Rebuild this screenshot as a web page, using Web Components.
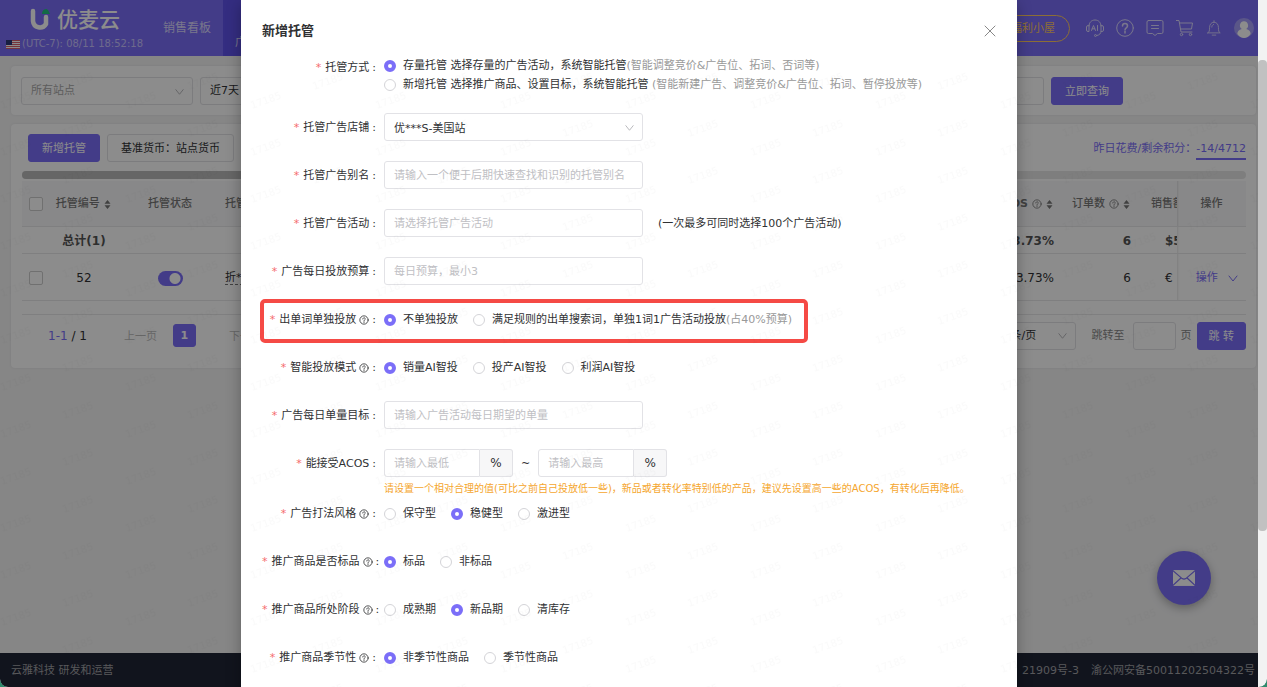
<!DOCTYPE html>
<html lang="zh-CN">
<head>
<meta charset="utf-8">
<meta name="viewport" content="width=device-width, initial-scale=1">
<title>优麦云</title>
<style>
    html {
        background: #2f8a6c;
    }

    body {
        --primary: #7b6ef8;
        --text: #303133;
        --muted: #999;
        --line: #e2e2e6;
        margin: 0;
        display: flex;
        height: 100vh;
        overflow: hidden;
        border-radius: 0 0 8px 8px;
        color: var(--text);
        font: 11px/18px "DejaVu Sans", "Noto Sans CJK SC", sans-serif;
    }
</style>
</head>
<body>
<app-shell>
    <app-header slot="header"></app-header>
    <filter-bar></filter-bar>
    <hosting-table></hosting-table>
    <app-footer slot="footer"></app-footer>
    <mail-button slot="overlay"></mail-button>
    <hosting-dialog slot="dialog"></hosting-dialog>
</app-shell>
<page-scrollbar></page-scrollbar>

<script>
const controls = `
    * {
        box-sizing: border-box;
    }

    button, input, select {
        font: inherit;
        color: inherit;
        margin: 0;
    }

    button {
        height: 28px;
        padding: 2px 13px 0;
        border: 1px solid var(--line);
        border-radius: 3px;
        background: #fff;
        white-space: nowrap;
    }

    button.primary {
        border-color: var(--primary);
        background: var(--primary);
        color: #fff;
    }

    input[type="text"], select {
        height: 28px;
        min-width: 0;
        padding: 0 9px;
        border: 1px solid var(--line);
        border-radius: 3px;
        background: #fff;
        appearance: none;
        outline: none;
    }

    input[type="text"] {
        padding-top: 2px;
    }

    input::placeholder {
        color: #c0c0c4;
        opacity: 1;
    }

    .select {
        display: grid;
        align-items: center;
    }

    .select > * {
        grid-area: 1 / 1;
    }

    .select ui-icon {
        justify-self: end;
        margin-right: 8px;
        color: #b4b4b8;
        pointer-events: none;
    }
`;

const icons = {
    down: '<path d="M2 4l4 5 4-5"/>',
    close: '<path d="M1 1l10 10M11 1L1 11"/>',
    help: '<circle cx="6" cy="6" r="5"/><path d="M4.5 4.8c0-2 3-2 3 0 0 1.100-1.500 1.100-1.500 2.200M6 8.200v.8"/>',
    sort: '<path d="M6 0l4 5H2zM6 12l4-5H2z" fill="currentColor" stroke="none"/>',
    question: '<circle cx="9" cy="9" r="8.300"/><path d="M6.500 7c0-3.300 5-3.300 5 0 0 1.900-2.500 1.900-2.500 4" stroke-width="1.500"/><path d="M9 12.600v1.400" stroke-width="1.500"/>',
    message: '<path d="M2.500 1.500h13q1.500 0 1.500 1.500v10q0 1.500-1.500 1.500h-4L9 16.500l-2.500-2h-4Q1 14.500 1 13V3q0-1.500 1.500-1.500zM5.500 6.500h7M5.500 9.500h7"/>',
    cart: '<path d="M0 1.500h3l2 11.500h11M3.500 4h13L15.500 10H4.500"/><circle cx="5.500" cy="15.500" r="1.200"/><circle cx="14.500" cy="15.500" r="1.200"/>',
    bell: '<path d="M2 14.500h14c-1.700-1-2-2-2-6C14 5 12 2.500 9 2.500S4 5 4 8.500c0 4-.3 5-2 6zM9 .8v1.700M7 17h4M6.500 8c0-1.500.8-2.500 2-3"/>',
    headset: '<path d="M3 7C3 3.500 5.500 1 9 1s6 2.500 6 6M3 6.500v6H2q-1.500 0-1.500-1.500V8Q.5 6.500 2 6.500zM15 6.500v6h1q1.500 0 1.500-1.500V8q0-1.500-1.500-1.500zM15 12.500c0 2-1.500 3.500-4 4"/><circle cx="9.500" cy="16.500" r="1"/><path d="M5.500 11.500l2-5 2 5M6.200 9.800h2.600M11.500 6.500v5"/>',
    avatar: '<circle cx="9" cy="9" r="9" fill="#a59df8" stroke="none"/><path d="M9 3a3.600 3.800 0 0 1 2 7c2.500.6 4 2 4 4.500Q12.500 18 9 18t-6-3.500C3 12 4.500 10.600 7 10A3.600 3.800 0 0 1 9 3z" fill="#fff" stroke="none"/>',
    mail: '<path d="M0 2.500h18v13H0z" fill="#fff" stroke="none"/><path d="M0 3l7.500 6.500q1.500 1 3 0L18 3M0 15l6.500-6M18 15l-6.500-6" stroke="#7b6ef8"/>'
};

class UiIcon extends HTMLElement {
    constructor() {
        super();
        const name = this.getAttribute("name");
        const size = this.getAttribute("size") || 12;
        const box = ["down", "close", "help", "sort"].includes(name) ? 12 : 18;

        this.attachShadow({ mode: "open" });
        this.shadowRoot.innerHTML = `
        <style>
            :host {
                display: inline-flex;
                flex: none;
                vertical-align: middle;
            }
        </style>
        <svg width="${size}" height="${size}" viewBox="0 0 ${box} ${box}" fill="none" stroke="currentColor"
            stroke-width="1" stroke-linecap="round" stroke-linejoin="round" aria-hidden="true">${icons[name]}</svg>`;
    }
}

class AppShell extends HTMLElement {
    constructor() {
        super();

        this.attachShadow({ mode: "open" });
        this.shadowRoot.innerHTML = `
        <style>
            :host {
                flex: 1;
                min-width: 0;
                display: flex;
                flex-direction: column;
                position: relative;
                overflow: hidden;
                background: #f4f4f5;
                border-radius: 0 0 0 8px;
            }

            main {
                flex: 1;
                display: flex;
                flex-direction: column;
                gap: 9px;
                padding: 10px 2px 0 11px;
            }

            .mask {
                position: absolute;
                inset: 0;
                background: rgba(0, 0, 0, 0.45);
            }

            .watermark {
                position: absolute;
                inset: 66px 0 0 0;
                pointer-events: none;
            }
        </style>
        <slot name="header"></slot>
        <main><slot></slot></main>
        <slot name="footer"></slot>
        <slot name="overlay"></slot>
        <div class="mask"></div>
        <slot name="dialog"></slot>
        <svg class="watermark" width="100%" height="100%" aria-hidden="true">
            <defs>
                <pattern id="mark" width="125" height="47" patternUnits="userSpaceOnUse">
                    <g fill="#000" fill-opacity="0.02" font-size="10">
                        <text transform="translate(2 43) rotate(-20)">17185</text>
                        <text transform="translate(64 24) rotate(-20)">17185</text>
                    </g>
                </pattern>
            </defs>
            <rect width="100%" height="100%" fill="url(#mark)"/>
        </svg>`;
    }
}

class AppHeader extends HTMLElement {
    constructor() {
        super();

        this.attachShadow({ mode: "open" });
        this.shadowRoot.innerHTML = `
        <style>
            :host {
                display: flex;
                height: 56px;
                background: var(--primary);
                color: #dcd8ff;
            }

            .brand {
                width: 151px;
                padding: 7px 0 0 6px;
                box-sizing: border-box;
            }

            .logo {
                display: flex;
                align-items: center;
                gap: 7px;
                padding-left: 24px;
                color: #fff;
                font-size: 21px;
                font-weight: 500;
                line-height: 26px;
            }

            .time {
                display: flex;
                align-items: center;
                gap: 2px;
                padding-top: 2px;
                white-space: nowrap;
                color: #c8c2ff;
                font-size: 10px;
            }

            svg {
                flex: none;
            }

            nav {
                display: flex;
            }

            a {
                display: flex;
                align-items: center;
                padding: 0 12px;
                color: inherit;
                font-size: 12px;
                text-decoration: none;
            }

            a.active {
                align-items: flex-end;
                padding-bottom: 4px;
                background: #6052ec;
                font-size: 11px;
            }

            .tools {
                flex: 1;
                display: flex;
                justify-content: flex-end;
                align-items: center;
                gap: 12px;
                padding-right: 4px;
            }

            .welfare {
                height: 27px;
                margin-right: 4px;
                padding: 2px 14px 0;
                border: 1px solid #ffc861;
                border-radius: 14px;
                background: none;
                color: #ffc861;
                font: inherit;
            }
        </style>
        <div class="brand">
            <div class="logo">
                <svg width="20" height="24" viewBox="0 0 20 24" aria-hidden="true">
                    <path d="M3 3v10a7 7 0 0 0 13 3V9" fill="none" stroke="#fff" stroke-width="4.500" stroke-linecap="round"/>
                    <path d="M12 6q0-5 5-5 2 2 3 5z" fill="#22c17e"/>
                </svg>
                <span>优麦云</span>
            </div>
            <div class="time">
                <svg width="14" height="9" viewBox="0 0 14 9" aria-hidden="true">
                    <path d="M0 0h14v9H0z" fill="#fff"/>
                    <path d="M0 .5h14M0 2.500h14M0 4.500h14M0 6.500h14M0 8.500h14" stroke="#d8606c"/>
                    <path d="M0 0h6v5H0z" fill="#2c3a78"/>
                </svg>
                <span>(UTC-7): 08/11 18:52:18</span>
            </div>
        </div>
        <nav>
            <a href="#">销售看板</a>
            <a href="#" class="active">广告</a>
        </nav>
        <div class="tools">
            <button class="welfare">福利小屋</button>
            <ui-icon name="headset" size="18"></ui-icon>
            <ui-icon name="question" size="18"></ui-icon>
            <ui-icon name="message" size="18"></ui-icon>
            <ui-icon name="cart" size="18"></ui-icon>
            <ui-icon name="bell" size="16"></ui-icon>
            <ui-icon name="avatar" size="20"></ui-icon>
        </div>`;
    }
}

class FilterBar extends HTMLElement {
    constructor() {
        super();

        this.attachShadow({ mode: "open" });
        this.shadowRoot.innerHTML = `
        <style>
            ${controls}
            :host {
                display: flex;
                gap: 7px;
                padding: 11px 133px 10px 10px;
                background: #fff;
                border-radius: 4px;
                box-shadow: 0 0 3px rgba(0, 0, 0, 0.08);
            }

            .site {
                width: 172px;
                color: #aaa;
            }

            .days {
                width: 120px;
            }

            .keyword {
                flex: 1;
            }
        </style>
        <div class="select site">
            <select aria-label="站点"><option>所有站点</option></select>
            <ui-icon name="down" size="11"></ui-icon>
        </div>
        <div class="select days">
            <select aria-label="时间"><option>近7天</option></select>
            <ui-icon name="down" size="11"></ui-icon>
        </div>
        <input type="text" class="keyword" aria-label="关键词">
        <button class="primary">立即查询</button>`;
    }
}

class HostingTable extends HTMLElement {
    constructor() {
        super();

        this.attachShadow({ mode: "open" });
        this.shadowRoot.innerHTML = `
        <style>
            ${controls}
            :host {
                display: block;
                padding: 10px 10px 18px 11px;
                background: #fff;
                border-radius: 4px;
                box-shadow: 0 0 3px rgba(0, 0, 0, 0.08);
            }

            .toolbar {
                display: flex;
                align-items: center;
                gap: 7px;
                padding-left: 6px;
            }

            .points {
                margin-left: auto;
                padding-top: 4px;
                color: var(--primary);
            }

            .points a {
                display: inline-block;
                color: inherit;
                text-decoration: none;
                border-bottom: 2px solid var(--primary);
            }

            .track {
                height: 8px;
                margin: 9px 0 2px;
                border-radius: 4px;
                background: #e6e6e6;
            }

            .thumb {
                width: 60%;
                height: 8px;
                border-radius: 4px;
                background: #bbb;
            }

            table {
                width: 100%;
                table-layout: fixed;
                border-collapse: collapse;
            }

            th, td {
                padding: 2px 3px 0;
                border-bottom: 1px solid #e8e8ea;
                overflow: hidden;
                white-space: nowrap;
                text-align: center;
            }

            th {
                height: 45px;
                background: #f8f8f9;
                color: #777;
                font-weight: 500;
            }

            td {
                font-size: 12px;
            }

            .total td {
                height: 27px;
                font-weight: bold;
                color: #555;
            }

            .row td {
                height: 47px;
            }

            .left {
                text-align: left;
            }

            .right {
                text-align: right;
            }

            th.cut {
                padding: 2px 0 0 17px;
            }

            td.cut {
                padding: 2px 0 0 31px;
            }

            .fixed {
                box-shadow: inset 3px 0 3px -3px rgba(0, 0, 0, 0.2);
            }

            .name {
                border-bottom: 1px dashed #777;
                font-size: 11px;
            }

            .action {
                height: 18px;
                padding: 0 0 0 12px;
                border: 0;
                background: none;
                color: var(--primary);
                font-size: 11px;
            }

            .action ui-icon {
                margin-left: 6px;
            }

            input[type="checkbox"] {
                width: 14px;
                height: 14px;
                border: 1px solid #ccc;
                border-radius: 2px;
                background: #fff;
                appearance: none;
                vertical-align: middle;
            }

            input.switch {
                width: 25px;
                height: 15px;
                border: 0;
                border-radius: 8px;
                background: radial-gradient(circle at 17px 50%, #fff 5px, var(--primary) 6px);
            }

            .pager {
                display: flex;
                align-items: center;
                gap: 16px;
                margin-top: 13px;
                padding: 7px 0 0 26px;
                border-top: 1px solid #e8e8ea;
                color: #888;
            }

            .range {
                margin-right: 21px;
                color: var(--text);
                font-size: 12px;
            }

            .range b {
                color: var(--primary);
                font-weight: normal;
            }

            .link {
                height: 22px;
                padding: 2px 0 0;
                border: 0;
                background: none;
                color: #bbb;
            }

            .current {
                width: 23px;
                height: 23px;
                padding: 0;
                font-weight: bold;
            }

            .next {
                margin-left: 17px;
            }

            .size {
                width: 90px;
                margin-left: auto;
                color: var(--text);
            }

            .size select {
                padding-left: 10px;
            }

            .jump {
                display: flex;
                align-items: center;
                gap: 5px;
            }

            .jump label {
                margin-right: 3px;
            }

            .jump input {
                width: 43px;
            }

            .jump button {
                padding: 2px 11px 0;
            }
        </style>
        <div class="toolbar">
            <button class="primary">新增托管</button>
            <button>基准货币：站点货币</button>
            <span class="points">昨日花费/剩余积分：<a href="#">-14/4712</a></span>
        </div>
        <div class="track"><div class="thumb"></div></div>
        <table>
            <colgroup>
                <col style="width: 28px"><col style="width: 68px"><col style="width: 104px">
                <col style="width: 120px"><col><col style="width: 120px">
                <col style="width: 77px"><col style="width: 43px"><col style="width: 69px">
            </colgroup>
            <thead>
                <tr>
                    <th><input type="checkbox" aria-label="全选"></th>
                    <th>托管编号 <ui-icon name="sort" size="9"></ui-icon></th>
                    <th>托管状态</th>
                    <th class="left">托管</th>
                    <th></th>
                    <th class="right"><b>ACOS</b> <ui-icon name="help" size="10"></ui-icon> <ui-icon name="sort" size="9"></ui-icon></th>
                    <th class="right">订单数 <ui-icon name="help" size="10"></ui-icon> <ui-icon name="sort" size="9"></ui-icon></th>
                    <th class="left cut">销售额</th>
                    <th class="fixed">操作</th>
                </tr>
            </thead>
            <tbody>
                <tr class="total">
                    <td></td>
                    <td>总计(1)</td>
                    <td></td>
                    <td></td>
                    <td></td>
                    <td class="right">3.73%</td>
                    <td class="right">6</td>
                    <td class="left cut">$5</td>
                    <td class="fixed"></td>
                </tr>
                <tr class="row">
                    <td><input type="checkbox" aria-label="选择 52"></td>
                    <td>52</td>
                    <td><input type="checkbox" class="switch" aria-label="托管状态" checked></td>
                    <td class="left"><span class="name">折***</span></td>
                    <td></td>
                    <td class="right">3.73%</td>
                    <td class="right">6</td>
                    <td class="left cut">€</td>
                    <td class="fixed"><button class="action">操作 <ui-icon name="down"></ui-icon></button></td>
                </tr>
            </tbody>
        </table>
        <div class="pager">
            <span class="range"><b>1-1</b> / 1</span>
            <button class="link">上一页</button>
            <button class="primary current">1</button>
            <button class="link next">下一页</button>
            <div class="select size">
                <select aria-label="每页条数"><option>20条/页</option></select>
                <ui-icon name="down" size="11"></ui-icon>
            </div>
            <div class="jump">
                <label for="page">跳转至</label>
                <input type="text" id="page">
                <span>页</span>
                <button class="primary">跳 转</button>
            </div>
        </div>`;
    }
}

class AppFooter extends HTMLElement {
    constructor() {
        super();

        this.attachShadow({ mode: "open" });
        this.shadowRoot.innerHTML = `
        <style>
            :host {
                box-sizing: border-box;
                display: flex;
                justify-content: space-between;
                align-items: center;
                height: 34px;
                padding: 2px 3px 0 11px;
                background: #1f2536;
                color: #a0a0a4;
            }

            span + span {
                margin-left: 12px;
            }
        </style>
        <div>云雅科技 研发和运营</div>
        <div><span>21909号-3</span><span>渝公网安备50011202504322号</span></div>`;
    }
}

class MailButton extends HTMLElement {
    constructor() {
        super();

        this.attachShadow({ mode: "open" });
        this.shadowRoot.innerHTML = `
        <style>
            :host {
                position: absolute;
                right: 47px;
                bottom: 82px;
            }

            button {
                display: grid;
                place-items: center;
                width: 54px;
                height: 54px;
                padding: 0;
                border: 0;
                border-radius: 50%;
                background: var(--primary);
                box-shadow: 0 3px 10px rgba(0, 0, 0, 0.3);
            }
        </style>
        <button aria-label="消息"><ui-icon name="mail" size="22"></ui-icon></button>`;
    }
}

class PageScrollbar extends HTMLElement {
    constructor() {
        super();

        this.attachShadow({ mode: "open" });
        this.shadowRoot.innerHTML = `
        <style>
            :host {
                display: grid;
                grid-template-rows: 60fr 471fr 156fr;
                width: 9px;
                background: #f2f2f2;
                border-radius: 0 0 8px 0;
            }

            div {
                grid-row: 2;
                background: #c1c1c1;
                border-radius: 4px;
            }
        </style>
        <div></div>`;
    }
}

class FormRow extends HTMLElement {
    constructor() {
        super();

        this.attachShadow({ mode: "open" });
        this.shadowRoot.innerHTML = `
        <style>
            :host {
                display: flex;
                align-items: flex-start;
                gap: 8px;
                margin-bottom: 18px;
                line-height: 30px;
            }

            :host([marked]) {
                position: relative;
                width: fit-content;
            }

            :host([marked])::after {
                content: "";
                position: absolute;
                inset: -6px -16px -8px -2px;
                border: 4px solid #f54a45;
                border-radius: 5px;
                pointer-events: none;
            }

            .label {
                flex: none;
                width: 114px;
                text-align: right;
                white-space: nowrap;
            }

            .star {
                margin-right: 4px;
                color: #f56c6c;
            }

            ui-icon {
                margin-left: 3px;
            }

            .colon {
                margin-left: 3px;
            }
        </style>
        <div class="label">
            <span class="star">*</span><slot name="label"></slot>${this.hasAttribute("help") ? '<ui-icon name="help" size="10"></ui-icon>' : ""}<span class="colon">:</span>
        </div>
        <slot></slot>`;
    }
}

class HostingDialog extends HTMLElement {
    constructor() {
        super();

        this.attachShadow({ mode: "open" });
        this.shadowRoot.innerHTML = `
        <style>
            ${controls}
            :host {
                position: absolute;
                inset: 0;
                display: flex;
                justify-content: center;
                overflow: hidden;
            }

            section {
                width: 776px;
                max-width: 100%;
                height: max-content;
                min-height: 100%;
                padding: 20px 21px;
                background: #fff;
                box-shadow: 0 4px 14px rgba(0, 0, 0, 0.3);
            }

            header {
                display: flex;
                justify-content: space-between;
                align-items: center;
                height: 22px;
                margin-bottom: 14px;
            }

            h2 {
                margin: 0;
                font-size: 13px;
                font-weight: bold;
            }

            .close {
                height: 22px;
                padding: 0;
                border: 0;
                color: #888;
            }

            .group {
                display: flex;
                gap: 15px;
            }

            .group label {
                display: flex;
                align-items: center;
                white-space: pre;
            }

            form-row.mode {
                height: 37px;
                margin-bottom: 20px;
                line-height: 24px;
            }

            .stack {
                flex-direction: column;
                gap: 0;
                line-height: 19px;
            }

            input[type="radio"] {
                width: 12px;
                height: 12px;
                margin-right: 7px;
                border: 1px solid #d4d4d8;
                border-radius: 50%;
                background: #fff;
                appearance: none;
            }

            input[type="radio"]:checked {
                border: 4px solid var(--primary);
            }

            .muted {
                color: var(--muted);
            }

            .wide {
                width: 259px;
            }

            .note {
                margin-left: 7px;
            }

            .range {
                display: flex;
                align-items: flex-start;
                gap: 8px;
            }

            .percent {
                display: flex;
                width: 129px;
            }

            .percent input {
                flex: 1;
                border-radius: 3px 0 0 3px;
            }

            .percent span {
                width: 33px;
                border: 1px solid var(--line);
                border-left: 0;
                border-radius: 0 3px 3px 0;
                background: #f7f7f8;
                font-size: 12px;
                line-height: 26px;
                text-align: center;
            }

            form-row.hinted {
                margin-bottom: 0;
            }

            .hint {
                margin: 0;
                color: #f5a62e;
                font-size: 10px;
                line-height: 20px;
            }
        </style>
        <section role="dialog" aria-labelledby="title">
            <header>
                <h2 id="title">新增托管</h2>
                <button class="close" aria-label="关闭"><ui-icon name="close"></ui-icon></button>
            </header>
            <form>
                <form-row class="mode">
                    <span slot="label" id="mode">托管方式</span>
                    <div class="group stack" role="radiogroup" aria-labelledby="mode">
                        <label><input type="radio" name="mode" checked>存量托管 选择存量的广告活动，系统智能托管<span class="muted">(智能调整竞价&amp;广告位、拓词、否词等)</span></label>
                        <label><input type="radio" name="mode">新增托管 选择推广商品、设置目标，系统智能托管 <span class="muted">(智能新建广告、调整竞价&amp;广告位、拓词、暂停投放等)</span></label>
                    </div>
                </form-row>
                <form-row>
                    <label slot="label" for="shop">托管广告店铺</label>
                    <div class="select wide">
                        <select id="shop"><option>优***S-美国站</option></select>
                        <ui-icon name="down" size="11"></ui-icon>
                    </div>
                </form-row>
                <form-row>
                    <label slot="label" for="alias">托管广告别名</label>
                    <input type="text" id="alias" class="wide" placeholder="请输入一个便于后期快速查找和识别的托管别名">
                </form-row>
                <form-row>
                    <label slot="label" for="campaign">托管广告活动</label>
                    <input type="text" id="campaign" class="wide" placeholder="请选择托管广告活动">
                    <span class="note">(一次最多可同时选择100个广告活动)</span>
                </form-row>
                <form-row>
                    <label slot="label" for="budget">广告每日投放预算</label>
                    <input type="text" id="budget" class="wide" placeholder="每日预算，最小3">
                </form-row>
                <form-row help marked>
                    <span slot="label" id="single">出单词单独投放</span>
                    <div class="group" role="radiogroup" aria-labelledby="single">
                        <label><input type="radio" name="single" checked>不单独投放</label>
                        <label><input type="radio" name="single">满足规则的出单搜索词，单独1词1广告活动投放<span class="muted">(占40%预算)</span></label>
                    </div>
                </form-row>
                <form-row help>
                    <span slot="label" id="smart">智能投放模式</span>
                    <div class="group" role="radiogroup" aria-labelledby="smart">
                        <label><input type="radio" name="smart" checked>销量AI智投</label>
                        <label><input type="radio" name="smart">投产AI智投</label>
                        <label><input type="radio" name="smart">利润AI智投</label>
                    </div>
                </form-row>
                <form-row>
                    <label slot="label" for="orders">广告每日单量目标</label>
                    <input type="text" id="orders" class="wide" placeholder="请输入广告活动每日期望的单量">
                </form-row>
                <form-row class="hinted">
                    <label slot="label" for="acos">能接受ACOS</label>
                    <div>
                        <div class="range">
                            <div class="percent"><input type="text" id="acos" placeholder="请输入最低"><span>%</span></div>
                            ~
                            <div class="percent"><input type="text" aria-label="最高ACOS" placeholder="请输入最高"><span>%</span></div>
                        </div>
                        <p class="hint">请设置一个相对合理的值(可比之前自己投放低一些)，新品或者转化率特别低的产品，建议先设置高一些的ACOS，有转化后再降低。</p>
                    </div>
                </form-row>
                <form-row help>
                    <span slot="label" id="style">广告打法风格</span>
                    <div class="group" role="radiogroup" aria-labelledby="style">
                        <label><input type="radio" name="style">保守型</label>
                        <label><input type="radio" name="style" checked>稳健型</label>
                        <label><input type="radio" name="style">激进型</label>
                    </div>
                </form-row>
                <form-row help>
                    <span slot="label" id="standard">推广商品是否标品</span>
                    <div class="group" role="radiogroup" aria-labelledby="standard">
                        <label><input type="radio" name="standard" checked>标品</label>
                        <label><input type="radio" name="standard">非标品</label>
                    </div>
                </form-row>
                <form-row help>
                    <span slot="label" id="stage">推广商品所处阶段</span>
                    <div class="group" role="radiogroup" aria-labelledby="stage">
                        <label><input type="radio" name="stage">成熟期</label>
                        <label><input type="radio" name="stage" checked>新品期</label>
                        <label><input type="radio" name="stage">清库存</label>
                    </div>
                </form-row>
                <form-row help>
                    <span slot="label" id="season">推广商品季节性</span>
                    <div class="group" role="radiogroup" aria-labelledby="season">
                        <label><input type="radio" name="season" checked>非季节性商品</label>
                        <label><input type="radio" name="season">季节性商品</label>
                    </div>
                </form-row>
            </form>
        </section>`;
    }
}

window.customElements.define('ui-icon', UiIcon);
window.customElements.define('app-shell', AppShell);
window.customElements.define('app-header', AppHeader);
window.customElements.define('filter-bar', FilterBar);
window.customElements.define('hosting-table', HostingTable);
window.customElements.define('app-footer', AppFooter);
window.customElements.define('mail-button', MailButton);
window.customElements.define('page-scrollbar', PageScrollbar);
window.customElements.define('form-row', FormRow);
window.customElements.define('hosting-dialog', HostingDialog);
</script>
</body>
</html>
